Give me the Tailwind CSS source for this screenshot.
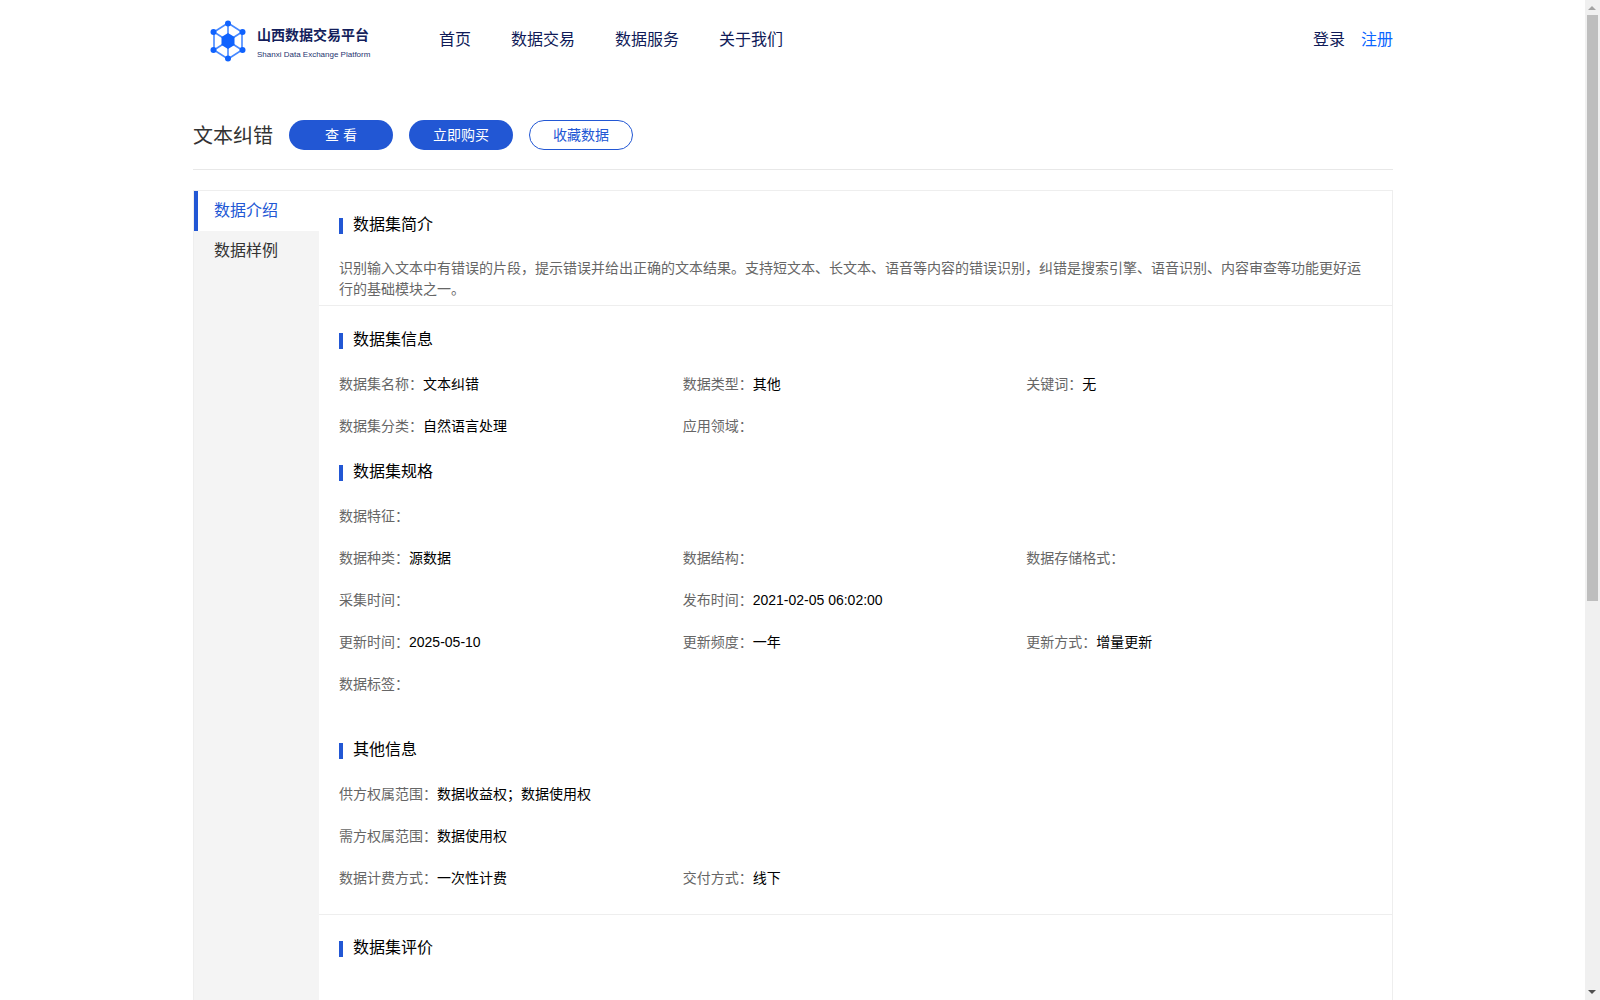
<!DOCTYPE html>
<html lang="zh-CN">
<head>
  <meta charset="UTF-8" />
  <title>山西数据交易平台 - 文本纠错</title>
  <script src="https://cdn.jsdelivr.net/npm/@tailwindcss/browser@4"></script>
</head>
<body class="bg-white font-['Liberation_Sans','Noto_Sans_CJK_SC',sans-serif] text-sm text-[#333]">
<div class="relative h-[1000px] overflow-hidden">

  <div class="ml-[193px] w-[1200px]">
    <!-- Navbar -->
    <nav class="flex h-[78px] items-center text-base text-[#101b58]">
      <div class="flex w-[246px] items-center pt-1 pl-[16px]">
        <svg class="h-[42px] w-[38px] shrink-0" viewBox="0 0 38 42" fill="none">
          <g stroke="#1a6cff" stroke-width="1.6" opacity="0.8">
            <path d="M19 3 33 12 33 30 19 39 5 30 5 12Z" />
            <path d="M19 3V39M5 12 33 30M33 12 5 30" />
          </g>
          <path d="M19 13 25.500 17 25.500 25 19 29 12.500 25 12.500 17Z" fill="#0f62fe" />
          <g fill="#0f62fe">
            <circle cx="19" cy="3.500" r="3" />
            <circle cx="33.500" cy="12" r="3" />
            <circle cx="33.500" cy="30" r="3" />
            <circle cx="19" cy="38.500" r="3" />
            <circle cx="4.500" cy="30" r="3" />
            <circle cx="4.500" cy="12" r="3" />
          </g>
        </svg>
        <div class="mt-1 ml-[10px] shrink-0">
          <div class="text-sm leading-[16px] font-bold text-[#141f5c]">山西数据交易平台</div>
          <div class="mt-[7px] text-[8px] leading-[10px] whitespace-nowrap text-[#27346f]">Shanxi Data Exchange Platform</div>
        </div>
      </div>
      <div class="mt-[2px] flex gap-10">
        <a href="#">首页</a>
        <a href="#">数据交易</a>
        <a href="#">数据服务</a>
        <a href="#">关于我们</a>
      </div>
      <div class="mt-[2px] ml-auto flex gap-4">
        <a href="#">登录</a>
        <a href="#" class="text-[#0a66ff]">注册</a>
      </div>
    </nav>

    <!-- Title row -->
    <div class="mt-[42px] flex items-start border-b border-[#e8e8e8] pb-[19px]">
      <h1 class="h-[30px] w-[96px] text-xl leading-[32px] text-[#333]">文本纠错</h1>
      <div class="flex gap-4">
        <button class="h-[30px] w-[104px] rounded-full bg-[#2257d4] text-white">查 看</button>
        <button class="h-[30px] w-[104px] rounded-full bg-[#2257d4] text-white">立即购买</button>
        <button class="h-[30px] w-[104px] rounded-full border border-[#2257d4] bg-white text-[#2257d4]">收藏数据</button>
      </div>
    </div>

    <!-- Panel -->
    <div class="mt-5 flex min-h-[820px] border border-[#eeeeee]">
      <aside class="w-[125px] shrink-0 bg-[#f4f4f4] text-base">
        <div class="flex h-10 items-center border-l-4 border-[#2257d4] bg-white pl-4 text-[#2257d4]">数据介绍</div>
        <div class="flex h-10 items-center pl-5 text-[#333]">数据样例</div>
      </aside>

      <main class="min-w-0 flex-1">
        <section class="h-[115px] border-b border-[#eeeeee] pt-[23px] pr-[22px] pl-5">
          <h2 class="flex h-[22px] items-center gap-[10px] text-base text-black"><i class="mt-[1px] h-4 w-1 bg-[#2257d4]"></i>数据集简介</h2>
          <p class="mt-[22px] leading-[21px] text-[#666]">识别输入文本中有错误的片段，提示错误并给出正确的文本结果。支持短文本、长文本、语音等内容的错误识别，纠错是搜索引擎、语音识别、内容审查等功能更好运行的基础模块之一。</p>
        </section>

        <section class="h-[609px] border-b border-[#eeeeee] pt-[23px] pr-[22px] pl-5">
          <h2 class="flex h-[22px] items-center gap-[10px] text-base text-black"><i class="mt-[1px] h-4 w-1 bg-[#2257d4]"></i>数据集信息</h2>
          <div class="mt-3 grid grid-cols-3 auto-rows-[42px] items-center text-[#666]">
            <div>数据集名称：<span class="text-black">文本纠错</span></div>
            <div>数据类型：<span class="text-black">其他</span></div>
            <div>关键词：<span class="text-black">无</span></div>
            <div>数据集分类：<span class="text-black">自然语言处理</span></div>
            <div class="col-span-2">应用领域：</div>
          </div>

          <h2 class="mt-[14px] flex h-[22px] items-center gap-[10px] text-base text-black"><i class="mt-[1px] h-4 w-1 bg-[#2257d4]"></i>数据集规格</h2>
          <div class="mt-3 grid grid-cols-3 auto-rows-[42px] items-center text-[#666]">
            <div class="col-span-3">数据特征：</div>
            <div>数据种类：<span class="text-black">源数据</span></div>
            <div>数据结构：</div>
            <div>数据存储格式：</div>
            <div>采集时间：</div>
            <div class="col-span-2">发布时间：<span class="text-black">2021-02-05 06:02:00</span></div>
            <div>更新时间：<span class="text-black">2025-05-10</span></div>
            <div>更新频度：<span class="text-black">一年</span></div>
            <div>更新方式：<span class="text-black">增量更新</span></div>
            <div class="col-span-3">数据标签：</div>
          </div>

          <h2 class="mt-[34px] flex h-[22px] items-center gap-[10px] text-base text-black"><i class="mt-[1px] h-4 w-1 bg-[#2257d4]"></i>其他信息</h2>
          <div class="mt-3 grid grid-cols-3 auto-rows-[42px] items-center text-[#666]">
            <div class="col-span-3">供方权属范围：<span class="text-black">数据收益权；数据使用权</span></div>
            <div class="col-span-3">需方权属范围：<span class="text-black">数据使用权</span></div>
            <div>数据计费方式：<span class="text-black">一次性计费</span></div>
            <div class="col-span-2">交付方式：<span class="text-black">线下</span></div>
          </div>
        </section>

        <section class="pt-[22px] pl-5">
          <h2 class="flex h-[22px] items-center gap-[10px] text-base text-black"><i class="mt-[1px] h-4 w-1 bg-[#2257d4]"></i>数据集评价</h2>
        </section>
      </main>
    </div>
  </div>

  <!-- Scrollbar -->
  <div class="absolute top-0 right-0 h-full w-[15px] bg-[#f0f0f0]">
    <svg class="absolute top-[6px] left-[3px] h-1 w-[8px]" viewBox="0 0 8 4"><path d="M4 0 8 4H0Z" fill="#a3a3a3" /></svg>
    <div class="absolute top-[15px] left-[2px] h-[586px] w-[11px] bg-[#bebebe]"></div>
    <svg class="absolute bottom-[6px] left-[3px] h-1 w-[8px]" viewBox="0 0 8 4"><path d="M0 0H8L4 4Z" fill="#505050" /></svg>
  </div>
</div>
</body>
</html>
